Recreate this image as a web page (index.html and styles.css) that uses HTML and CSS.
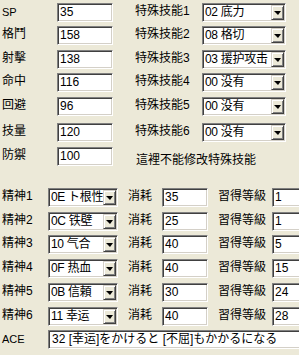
FILE: index.html
```html
<!DOCTYPE html>
<html lang="zh">
<head>
<meta charset="utf-8">
<link rel="stylesheet" href="styles.css">
</head>
<body>
<div class="panel">
  <div class="top">
    <span class="lbl lat">SP</span><span class="tb">35</span><span></span><span class="lbl">特殊技能1</span><span class="cb"><span class="cbt">02 底力</span><span class="btn"><i></i></span></span>
    <span class="lbl">格鬥</span><span class="tb">158</span><span></span><span class="lbl">特殊技能2</span><span class="cb"><span class="cbt">08 格切</span><span class="btn"><i></i></span></span>
    <span class="lbl">射擊</span><span class="tb">138</span><span></span><span class="lbl">特殊技能3</span><span class="cb"><span class="cbt">03 援护攻击</span><span class="btn"><i></i></span></span>
    <span class="lbl">命中</span><span class="tb">116</span><span></span><span class="lbl">特殊技能4</span><span class="cb"><span class="cbt">00 没有</span><span class="btn"><i></i></span></span>
    <span class="lbl">回避</span><span class="tb">96</span><span></span><span class="lbl">特殊技能5</span><span class="cb"><span class="cbt">00 没有</span><span class="btn"><i></i></span></span>
    <span class="lbl">技量</span><span class="tb">120</span><span></span><span class="lbl">特殊技能6</span><span class="cb"><span class="cbt">00 没有</span><span class="btn"><i></i></span></span>
    <span class="lbl">防禦</span><span class="tb">100</span><span></span><span class="note">這裡不能修改特殊技能</span>
  </div>
  <div class="bottom">
    <span class="lbl">精神1</span><span class="cb"><span class="cbt">0E ト根性</span><span class="btn"><i></i></span></span><span class="lbl pad">消耗</span><span class="tb">35</span><span class="lbl pad">習得等級</span><span class="tb">1</span>
    <span class="lbl">精神2</span><span class="cb"><span class="cbt">0C 铁壁</span><span class="btn"><i></i></span></span><span class="lbl pad">消耗</span><span class="tb">25</span><span class="lbl pad">習得等級</span><span class="tb">1</span>
    <span class="lbl">精神3</span><span class="cb"><span class="cbt">10 气合</span><span class="btn"><i></i></span></span><span class="lbl pad">消耗</span><span class="tb">40</span><span class="lbl pad">習得等級</span><span class="tb">5</span>
    <span class="lbl">精神4</span><span class="cb"><span class="cbt">0F 热血</span><span class="btn"><i></i></span></span><span class="lbl pad">消耗</span><span class="tb">40</span><span class="lbl pad">習得等級</span><span class="tb">15</span>
    <span class="lbl">精神5</span><span class="cb"><span class="cbt">0B 信頼</span><span class="btn"><i></i></span></span><span class="lbl pad">消耗</span><span class="tb">30</span><span class="lbl pad">習得等級</span><span class="tb">24</span>
    <span class="lbl">精神6</span><span class="cb"><span class="cbt">11 幸运</span><span class="btn"><i></i></span></span><span class="lbl pad">消耗</span><span class="tb">40</span><span class="lbl pad">習得等級</span><span class="tb">28</span>
    <span class="lbl lat">ACE</span><span class="tb ace">32 [幸运]をかけると [不屈]もかかるになる</span>
  </div>
</div>
</body>
</html>
```

FILE: styles.css
```css
html, body {
  margin: 0;
  padding: 0;
  overflow: hidden;
  background: #ece9d8;
}
body {
  width: 299px;
  height: 355px;
  font-family: "Liberation Sans", "Noto Sans CJK JP", sans-serif;
  font-size: 12px;
  color: #000;
}
.panel {
  padding: 3px 0 0 2px;
  width: 340px;
}
.top {
  display: grid;
  grid-template-columns: 55px 56px 22px 67px 84px;
  grid-template-rows: 23px 24px 23px 24px 26px 24px 24px;
  align-items: start;
}
.bottom {
  margin-top: 17px;
  display: grid;
  grid-template-columns: 46px 70px 44px 46px 64px 40px;
  grid-template-rows: 24px 23px 24px 24px 24px 23px 24px;
  align-items: start;
}
.lbl {
  line-height: 14px;
  padding-top: 1px;
  white-space: nowrap;
}
.lat {
  font-size: 11px;
  padding-top: 2px;
}
.pad {
  padding-left: 10px;
}
.note {
  grid-column: 4 / span 2;
  margin-left: 1px;
  padding-top: 6px;
  line-height: 14px;
  white-space: nowrap;
}
.tb {
  display: block;
  box-sizing: border-box;
  height: 19px;
  background: #fff;
  border: 1px solid;
  border-color: #808080 #fff #fff #808080;
  box-shadow: inset 1px 1px #404040, inset -1px -1px #d4d0c8;
  padding: 0 2px 0 2px;
  line-height: 17px;
  white-space: nowrap;
  overflow: hidden;
}
.ace {
  grid-column: 2 / -1;
  padding-left: 3px;
}
.cb {
  display: flex;
  box-sizing: border-box;
  height: 19px;
  background: #fff;
  border: 1px solid;
  border-color: #808080 #fff #fff #808080;
  box-shadow: inset 1px 1px #404040, inset -1px -1px #d4d0c8;
  padding: 1px;
}
.cbt {
  flex: 1;
  min-width: 0;
  line-height: 15px;
  padding-left: 1px;
  letter-spacing: -0.3px;
  white-space: nowrap;
  overflow: hidden;
}
.btn {
  flex: none;
  box-sizing: border-box;
  width: 13px;
  height: 15px;
  background: #ece9d8;
  border: 1px solid;
  border-color: #d4d0c8 #404040 #404040 #d4d0c8;
  box-shadow: inset 1px 1px #fff, inset -1px -1px #808080;
  display: flex;
  align-items: center;
  justify-content: center;
}
.btn i {
  display: block;
  width: 0;
  height: 0;
  border-left: 4px solid transparent;
  border-right: 3px solid transparent;
  border-top: 4px solid #000;
  margin-top: 1px;
}
```
